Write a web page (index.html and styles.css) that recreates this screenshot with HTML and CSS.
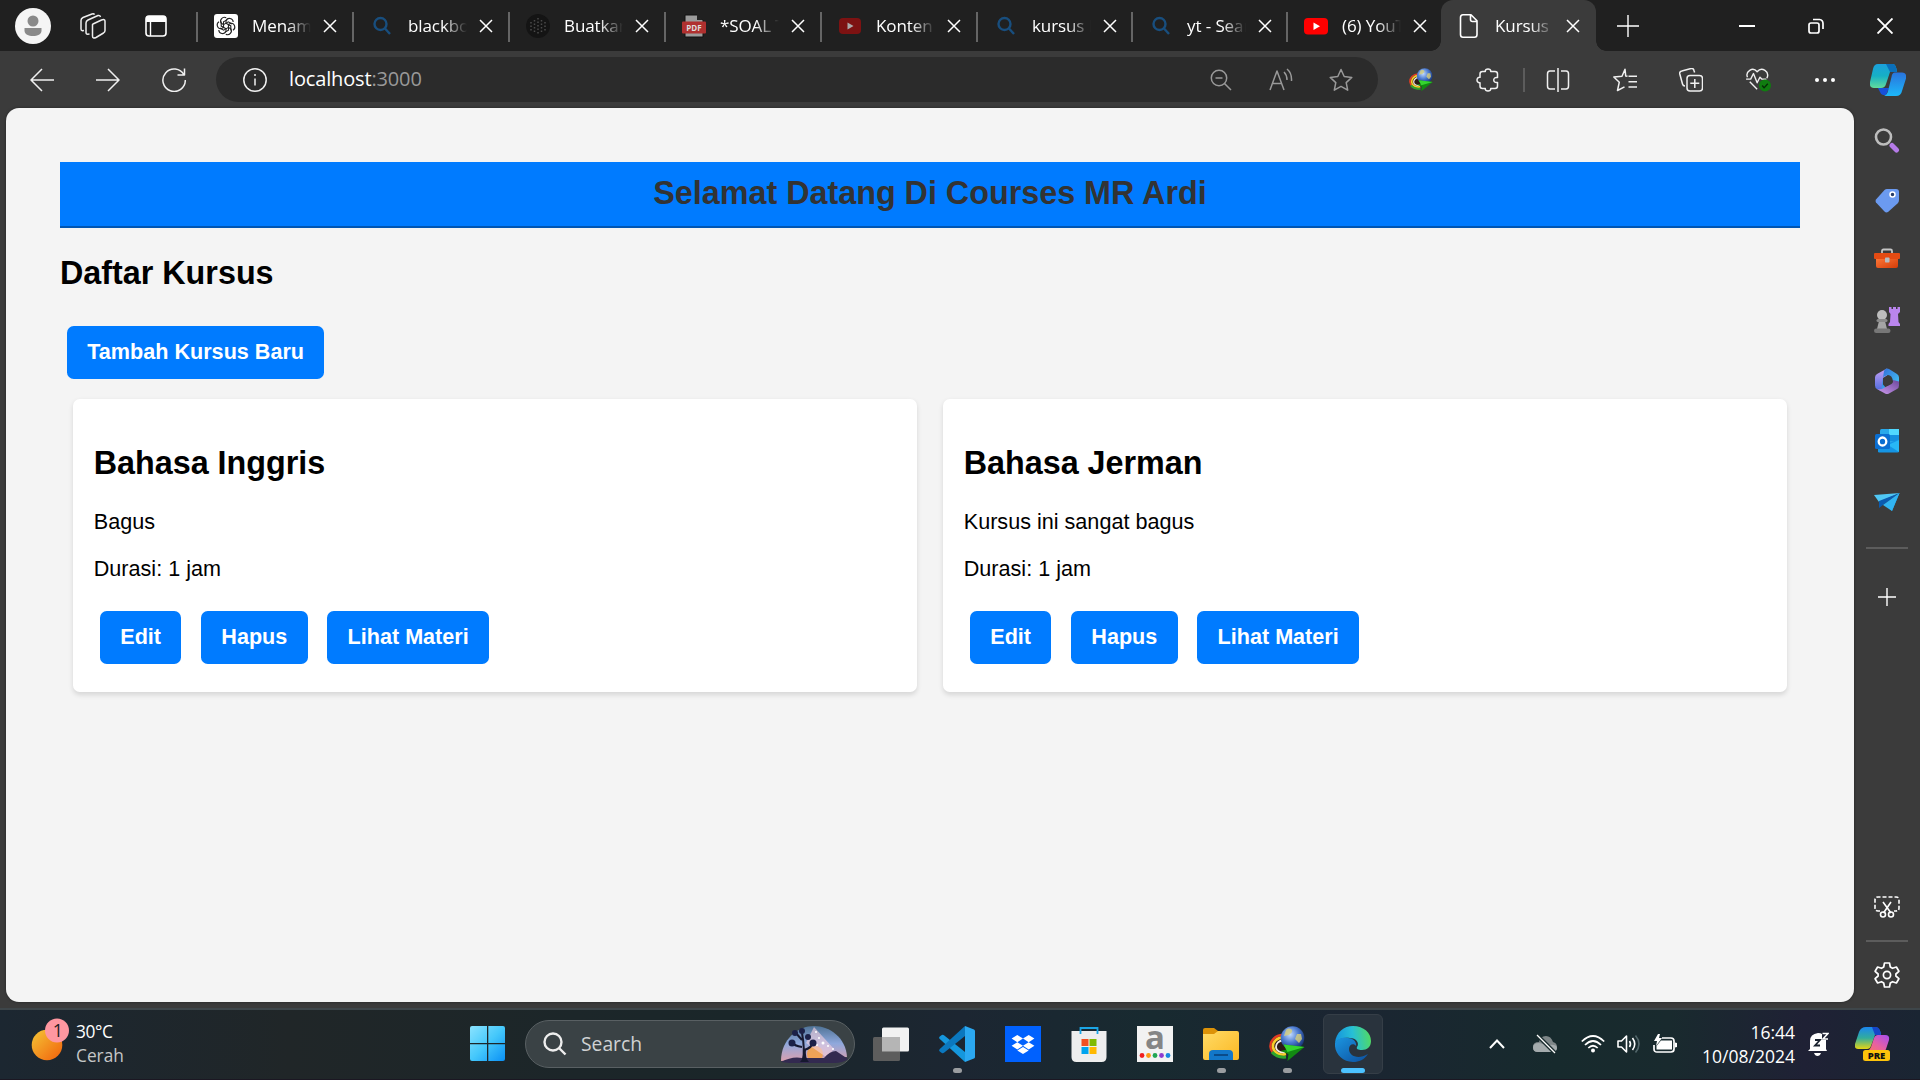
FILE: index.html
```html
<!DOCTYPE html>
<html lang="id">
<head>
<meta charset="utf-8">
<title>Kursus</title>
<link rel="stylesheet" href="styles.css">
</head>
<body>
<svg width="0" height="0" class="defs">
  <defs>
    <linearGradient id="gStart" x1="0" y1="0" x2="1" y2="1"><stop offset="0" stop-color="#8be3ff"/><stop offset=".5" stop-color="#45c8fb"/><stop offset="1" stop-color="#0a90f5"/></linearGradient>
    <linearGradient id="gSun" x1="0" y1="0" x2="1" y2="1"><stop offset="0" stop-color="#f5c636"/><stop offset="1" stop-color="#f1600b"/></linearGradient>
    <linearGradient id="gCopA" x1="0" y1="0" x2="0" y2="1"><stop offset="0" stop-color="#1ba0dc"/><stop offset=".5" stop-color="#16b0c5"/><stop offset="1" stop-color="#62dc9c"/></linearGradient>
    <linearGradient id="gCopB" x1="0" y1="0" x2="0" y2="1"><stop offset="0" stop-color="#2a73dc"/><stop offset="1" stop-color="#1cb8fa"/></linearGradient>
    <linearGradient id="gPreA" x1="0" y1="0" x2="0" y2="1"><stop offset="0" stop-color="#1b86f0"/><stop offset=".5" stop-color="#32ad9c"/><stop offset="1" stop-color="#e6d414"/></linearGradient>
    <linearGradient id="gPreB" x1="1" y1="0" x2="0" y2="1"><stop offset="0" stop-color="#a54df0"/><stop offset=".5" stop-color="#e55fa5"/><stop offset="1" stop-color="#ff7a52"/></linearGradient>
    <linearGradient id="gEdgeA" x1="0" y1=".5" x2="1" y2=".4"><stop offset="0" stop-color="#1593dd"/><stop offset=".5" stop-color="#27bfd6"/><stop offset="1" stop-color="#52da61"/></linearGradient>
    <linearGradient id="gEdgeB" x1="0" y1="0" x2="1" y2="1"><stop offset="0" stop-color="#1b95e0"/><stop offset="1" stop-color="#0c4f9e"/></linearGradient>
    <linearGradient id="gFolder" x1="0" y1="0" x2="1" y2="1"><stop offset="0" stop-color="#ffdb66"/><stop offset="1" stop-color="#fbb823"/></linearGradient>
    <radialGradient id="gGlobe" cx=".4" cy=".35" r=".7"><stop offset="0" stop-color="#c3dcff"/><stop offset=".5" stop-color="#4b7ad0"/><stop offset="1" stop-color="#122d6d"/></radialGradient>
    <linearGradient id="gM1" x1="0" y1="0" x2="0" y2="1"><stop offset="0" stop-color="#c8a0f3"/><stop offset="1" stop-color="#4a6be0"/></linearGradient>
    <linearGradient id="gM2" x1="0" y1="0" x2="1" y2="1"><stop offset="0" stop-color="#3168d8"/><stop offset="1" stop-color="#46d3f9"/></linearGradient>
    <linearGradient id="gM3" x1="0" y1="1" x2="1" y2="0"><stop offset="0" stop-color="#cf9bef"/><stop offset="1" stop-color="#6b479c"/></linearGradient>
    <linearGradient id="gOr" x1="0" y1="0" x2="1" y2="1"><stop offset="0" stop-color="#ff7b3b"/><stop offset="1" stop-color="#d43c08"/></linearGradient>
    <linearGradient id="gSky" x1="0" y1="0" x2="0" y2="1"><stop offset="0" stop-color="#4f7396"/><stop offset=".5" stop-color="#8fa8dc"/><stop offset="1" stop-color="#d9a0b0"/></linearGradient>
  </defs>
  <symbol id="x" viewBox="0 0 16 16"><path d="M2 2l12 12M14 2L2 14" fill="none" stroke="#fff" stroke-width="1.5"/></symbol>
  <symbol id="find" viewBox="0 0 24 24"><g fill="none" stroke="#184e7e" stroke-width="2.4"><circle cx="10.5" cy="10" r="6"/><path d="M15 14.5l5 5.500"/></g></symbol>
  <symbol id="idm" viewBox="0 0 36 36">
    <ellipse cx="12" cy="21" rx="10" ry="9" fill="#2c1a16"/>
    <path d="M14 9C6 9 1 15 1.500 21s7 11 15 9" fill="none" stroke="#e23b22" stroke-width="2.500"/>
    <path d="M14 11.500C8 11.500 3.500 16 4 21s6 9 13 7" fill="none" stroke="#f7cf2a" stroke-width="2.600"/>
    <path d="M3 26q5 6 14 5" fill="none" stroke="#2da52c" stroke-width="3"/>
    <path d="M14 14.500c-4 0-7 3-7 6.500s4 6 9 5" fill="none" stroke="#f3ece2" stroke-width="1.800"/>
    <circle cx="23.500" cy="12" r="11.800" fill="url(#gGlobe)"/>
    <path d="M17 4c3-3 7-1 6 2l-3 3-5 1zM28 8l4 0 1 5-3 4-4-4z" fill="#d8cf7b" opacity=".8"/>
    <path d="M14.500 18.500l21 2.500-17 14 1-7-8-3 6-1.500z" fill="#128a12"/><path d="M14.500 18.500l21 2.500-17 5z" fill="#35d52f"/>
  </symbol>
  <symbol id="star" viewBox="0 0 24 24"><path d="M12 1.500l3.200 7 7.600.9-5.600 5.200 1.500 7.600-6.700-3.800-6.700 3.800 1.500-7.600L1.200 9.400l7.600-.9z" fill="none" stroke="currentColor" stroke-width="1.500" stroke-linejoin="round"/></symbol>
</svg>

<header class="tabstrip">
  <div class="strip-tools">
    <svg class="avatar" viewBox="0 0 36 36"><circle cx="18" cy="18" r="18" fill="#f5f5f5"/><circle cx="18" cy="13" r="5.500" fill="#8a8a8a"/><path d="M9.500 20h17v2.500c0 4-4 5.500-8.500 5.500s-8.500-1.500-8.500-5.500z" fill="#8a8a8a"/></svg>
    <svg class="i26" viewBox="0 0 26 26" fill="none" stroke="#eee" stroke-width="1.500" stroke-linejoin="round"><path d="M13 11l8.500-4q3.500-1.200 3.500 1.200v9.300q0 1.500-1.500 2.500l-7.500 4.500q-3.500 1.500-3.500-1.500V11.500z"/><path d="M9.500 21l-2 .3q-1.500 0-1.500-2V10q0-2 2-3l10-4.500q2-.5 2.500 1.500"/><path d="M4 17.500l-1.500.3Q1 17.500 1 16V7.500q0-2 2-3L12 1q2-.5 2.500.6"/></svg>
    <svg class="i22" viewBox="0 0 22 22"><rect x="1" y="1" width="20" height="20" rx="3" fill="none" stroke="#fff" stroke-width="1.600"/><path d="M1 7V4q0-3 3-3h14q3 0 3 3v3z" fill="#fff"/><path d="M5.500 6v15" stroke="#fff" stroke-width="1.400"/></svg>
  </div>
  <nav class="tabs">
    <div class="tab"><svg class="fav" viewBox="0 0 24 24"><rect width="24" height="24" rx="3" fill="#fff"/><g fill="none" stroke="#222" stroke-width="1.100"><path id="petal" d="M12 9.200V6.500a3.800 3.800 0 0 1 7.200 1.600M12 9.200l4.800 2.700v4.500"/><use href="#petal" transform="rotate(60 12 12)"/><use href="#petal" transform="rotate(120 12 12)"/><use href="#petal" transform="rotate(180 12 12)"/><use href="#petal" transform="rotate(240 12 12)"/><use href="#petal" transform="rotate(300 12 12)"/></g></svg><span class="title">Menam</span><svg class="close"><use href="#x"/></svg></div>
    <div class="tab"><svg class="fav"><use href="#find"/></svg><span class="title">blackbo</span><svg class="close"><use href="#x"/></svg></div>
    <div class="tab"><svg class="fav" viewBox="0 0 24 24"><circle cx="12" cy="12" r="12" fill="#141414"/><g stroke="#4a4a4a" stroke-width="1.500" stroke-dasharray="1.500 2"><path d="M12 4v17M8.500 6v13M15.500 6v13M5 8v9M19 8v9"/></g></svg><span class="title">Buatkan</span><svg class="close"><use href="#x"/></svg></div>
    <div class="tab"><svg class="fav" viewBox="0 0 24 24"><path d="M3 1h12l6 5v17H3z" fill="#9b9b9b" stroke="#111"/><path d="M15 0v6h6z" fill="#222"/><rect x="0" y="7.500" width="24" height="12" rx="1" fill="#b0302f"/><text x="12" y="17" text-anchor="middle" class="pdf">PDF</text></svg><span class="title">*SOAL T</span><svg class="close"><use href="#x"/></svg></div>
    <div class="tab"><svg class="fav" viewBox="0 0 24 24"><rect x="1" y="4" width="22" height="16" rx="4" fill="#7d1212"/><path d="M9.500 8.500v7l6-3.500z" fill="#aaa"/></svg><span class="title">Konten</span><svg class="close"><use href="#x"/></svg></div>
    <div class="tab"><svg class="fav"><use href="#find"/></svg><span class="title">kursus l</span><svg class="close"><use href="#x"/></svg></div>
    <div class="tab"><svg class="fav"><use href="#find"/></svg><span class="title">yt - Sear</span><svg class="close"><use href="#x"/></svg></div>
    <div class="tab"><svg class="fav" viewBox="0 0 24 24"><rect y="4" width="24" height="16.500" rx="4" fill="#f00"/><path d="M9.500 8.500v7.500l6.500-3.700z" fill="#fff"/></svg><span class="title">(6) YouT</span><svg class="close"><use href="#x"/></svg></div>
    <div class="tab active"><svg class="fav" viewBox="0 0 24 24" fill="none" stroke="#fff" stroke-width="1.600" stroke-linejoin="round"><path d="M6 .8h8l6 6V20.500q0 2.700-2.500 2.700H6q-2.500 0-2.500-2.700V3.500Q3.500.8 6 .8zM13.500 1v4.500q0 2 2 2H20"/></svg><span class="title">Kursus I</span><svg class="close"><use href="#x"/></svg></div>
  </nav>
  <svg class="newtab" viewBox="0 0 22 22"><path d="M11 0v22M0 11h22" stroke="#fff" stroke-width="1.400"/></svg>
  <div class="wincontrols">
    <svg viewBox="0 0 16 16"><path d="M0 8h16" stroke="#fff" stroke-width="2"/></svg>
    <svg viewBox="0 0 16 16" fill="none" stroke="#fff" stroke-width="1.700"><rect x="1" y="5" width="10" height="10" rx="2"/><path d="M5 1.500h6.500q3.500.5 3.500 4V11"/></svg>
    <svg viewBox="0 0 16 16"><path d="M.5.5l15 15M15.500.5l-15 15" stroke="#fff" stroke-width="1.900"/></svg>
  </div>
</header>

<div class="toolbar">
  <div class="nav">
    <svg viewBox="0 0 24 24"><path d="M24 12H1M12 1L1 12l11 11"/></svg>
    <svg viewBox="0 0 24 24"><path d="M0 12h23M12 1l11 11-11 11"/></svg>
    <svg viewBox="0 0 24 24"><path d="M22 7A11.200 11.200 0 1 0 23.300 12M22.500.5V7h-7"/></svg>
  </div>
  <div class="address">
    <svg viewBox="0 0 24 24" class="info"><circle cx="12" cy="12" r="11.200"/><path d="M12 10.500v7M12 6v2"/></svg>
    <div class="url">localhost<span>:3000</span></div>
    <div class="addr-icons">
      <svg viewBox="0 0 24 24"><circle cx="10" cy="10" r="7.700"/><path d="M6.500 10h7M15.500 15.500l6.500 6.500"/></svg>
      <svg viewBox="0 0 24 24"><path d="M1 22L8 3l7 19M3.500 15.500h9M15 4q3 3 3 8M18 1q5 4 4.500 12"/></svg>
      <svg viewBox="0 0 24 24"><use href="#star"/></svg>
    </div>
  </div>
  <div class="ext">
    <svg viewBox="0 0 36 36"><use href="#idm"/></svg>
    <svg viewBox="0 0 24 24"><path d="M6.500 3.500h2.800c-.8-3.400 6.200-3.400 5.400 0h4.300q2.500 0 2.500 2.500v3.500c-5-1-5 6 0 5v3.500q0 2.500-2.500 2.500h-4.300c.8 3.400-6.200 3.400-5.400 0H6.500Q4 20.500 4 18v-3.300c-4 .6-4-6 0-5.400V6q0-2.500 2.500-2.500z"/></svg>
  </div>
  <div class="actions">
    <svg viewBox="0 0 24 24"><path d="M12 0v24M9 3H4Q1.500 3 1.500 6v12q0 3 2.500 3h5M15 3h5q2.500 0 2.500 3v12q0 3-2.500 3h-5"/></svg>
    <svg viewBox="0 0 24 24"><path d="M14.500 8.300l-1.800-.4L12 1.200 9 8.300l-8.200.7 5.500 5.200L4.500 22.500 11.500 18.800M15.500 8.300H24M15.500 13.800H24M15.500 19H24"/></svg>
    <svg viewBox="0 0 24 24"><rect x="8" y="7.500" width="15.500" height="15.500" rx="3"/><path d="M15.800 11v9M11.300 15.300h9M6 18q-2 0-2.500-2L.8 6q-.5-2.500 2-3L12 .5q2.500-.5 3 2l.6 2"/></svg>
    <svg viewBox="0 0 28 26" class="heart"><path d="M1.500 10C-1 4 7-2 12 4c5-6 14 0 10.500 7M0 12h5l3-6 4 10 3-6 2 2h5M4 15l8 8"/><circle cx="20.500" cy="19" r="6.500" fill="#107c10" stroke="none"/><path d="M17.500 19l2 2.500 4-4.500" stroke="#062d06"/></svg>
    <svg viewBox="0 0 24 24"><g fill="#fff" stroke="none"><circle cx="4" cy="12" r="2"/><circle cx="12" cy="12" r="2"/><circle cx="20" cy="12" r="2"/></g></svg>
  </div>
  <svg class="copilot" viewBox="0 0 36 32"><path d="M8 24h11l-3 7h-3q-2 0-3-3z" fill="#1750d9"/><path d="M8 0h15q3 0 4 8h-7l-4 12q-1 4-5 4H4q-5 0-4-6L3 5q1-5 5-5z" fill="url(#gCopA)"/><path d="M16 0h7q3 0 4 8h-7z" fill="#0a6fba"/><path d="M25 8.500h7q5 0 4 6l-4 12.500q-1 5-6 5H14q3-1 4-5l3.500-14q.5-4.500 3.500-4.500z" fill="url(#gCopB)"/></svg>
</div>

<div class="workspace">
  <main class="page">
    <h1 class="banner">Selamat Datang Di Courses MR Ardi</h1>
    <h2>Daftar Kursus</h2>
    <a class="btn">Tambah Kursus Baru</a>
    <section class="courses">
      <article class="card">
        <h2>Bahasa Inggris</h2>
        <p>Bagus</p>
        <p>Durasi: 1 jam</p>
        <div class="buttons"><a class="btn">Edit</a> <a class="btn">Hapus</a> <a class="btn">Lihat Materi</a></div>
      </article>
      <article class="card">
        <h2>Bahasa Jerman</h2>
        <p>Kursus ini sangat bagus</p>
        <p>Durasi: 1 jam</p>
        <div class="buttons"><a class="btn">Edit</a> <a class="btn">Hapus</a> <a class="btn">Lihat Materi</a></div>
      </article>
    </section>
  </main>

  <aside class="sidebar">
    <div class="apps">
      <svg viewBox="0 0 26 26"><circle cx="9.500" cy="10" r="7.500" fill="none" stroke="#bdbdbd" stroke-width="2.600"/><path d="M18 18.500l4.500 4.500" stroke="#b57be8" stroke-width="5" stroke-linecap="round"/></svg>
      <svg viewBox="0 0 26 26"><path d="M13 2h9q3 0 3 3v8q0 2-1.500 3.500L14 25q-2 1-3.500-.5l-8.500-9q-1-1.500 0-3L10.500 3q1-1 2.500-1z" fill="#6b9af0"/><circle cx="18.500" cy="7.500" r="2.500" fill="#263b66" stroke="#fff" stroke-width="1.500"/></svg>
      <svg viewBox="0 0 26 26"><path d="M8 7V4q0-1.500 1.500-1.500h7Q18 2.500 18 4v3" fill="none" stroke="#c5c5c5" stroke-width="1.800"/><path d="M2 10h22v9q0 2-2 2H4q-2 0-2-2z" fill="url(#gOr)"/><rect y="6" width="26" height="6" rx="1" fill="#e44b13"/><rect x="11" y="10.500" width="4.500" height="5" rx=".8" fill="#b7bcc0"/></svg>
      <svg viewBox="0 0 26 26"><path d="M15 0h2.500v2H19V0h3v2h1.500V0H26v5l-2 2 .5 8 1.500 2v2H14.500v-2l1.500-2 .5-8-1.500-2z" fill="#ba85ee"/><circle cx="8" cy="8" r="5" fill="#bdbdbd"/><path d="M5 14h6l2 8H3z" fill="#a5a5a5"/><rect x="2.500" y="12" width="11" height="3" rx="1.500" fill="#8b8b8b"/><rect x="0" y="21.500" width="16.500" height="4.500" rx="2.200" fill="#777"/></svg>
      <svg viewBox="0 0 26 26"><path d="M13 .5L3 6Q1 7 1 9.500v8Q1 20 3 21l4 2.300 2-6V10l4-2.500z" fill="url(#gM1)"/><path d="M7 23.300L12.500 20.500 9 16.500V10q0-1 1-1.500l4-1.500q4 0 5 6l6 1.500V9.500q0-2.500-2-3.500l-8-5q-2-1-4 .2L10 3z" fill="url(#gM2)"/><path d="M3 21q5 1 9.500-2.500l5-2.500q2-1.500 1.500-4l6 1.500v4q0 2.500-2 3.500l-8 4.500q-2 1-4 0z" fill="url(#gM3)"/><path d="M13 8.300l4.200 2.500v4.800L13 18l-4-2.400v-4.800z" fill="#3b3b3b"/></svg>
      <svg viewBox="0 0 26 26"><rect x="6" y="1" width="19" height="20" rx="1.500" fill="#28a8ea"/><path d="M15 1h10v6H15z" fill="#50d9ff"/><path d="M15 7h10v6H15z" fill="#1490df"/><path d="M4 24V16l11-1 10-4v12q0 1.500-1.500 1.500H5z" fill="#1595e5"/><path d="M25 12v12L14 17z" fill="#28b8f5"/><rect x="1" y="6" width="15" height="15" rx="1.500" fill="#0a6ed1"/><ellipse cx="8.500" cy="13.500" rx="3.800" ry="4" fill="none" stroke="#fff" stroke-width="2.300"/></svg>
      <svg viewBox="0 0 26 26"><path d="M0 7l26-2L5 14z" fill="#50c8f5"/><path d="M25.500 5L18 23l-6-6z" fill="#159ce8"/><path d="M25.500 5L5 13v7l4-3z" fill="#0a5bb0"/><path d="M25.500 5L9 17l9 6z" fill="#31b4f2"/></svg>
    </div>
    <hr>
    <svg class="add" viewBox="0 0 20 20"><path d="M10 1v18M1 10h18" stroke="#fff" stroke-width="1.400"/></svg>
    <div class="side-bottom">
      <svg viewBox="0 0 26 26" fill="none" stroke="#fff" stroke-width="1.600"><path d="M6 18H4q-3 0-3-3V7q0-3 3-3h18q3 0 3 3v8q0 3-3 3h-2" stroke-dasharray="4 2"/><path d="M9 9l8 11M17 9L9.500 20"/><circle cx="9" cy="21.500" r="2.500"/><circle cx="17" cy="21.500" r="2.500"/></svg>
      <hr>
      <svg viewBox="0 0 26 26" fill="none" stroke="#fff" stroke-width="1.700" stroke-linejoin="round"><circle cx="13" cy="13" r="3.600"/><path d="M10.500 1h5l.8 4 2.200 1.300 3.900-1.300 2.500 4.300-3 2.700v2l3 2.700-2.500 4.300-3.900-1.300-2.200 1.300-.8 4h-5l-.8-4-2.200-1.300L3.600 21 1.100 16.700l3-2.700v-2l-3-2.700L3.600 5l3.900 1.300L9.700 5z"/></svg>
    </div>
  </aside>
</div>

<footer class="taskbar">
  <div class="weather">
    <svg viewBox="0 0 42 50"><circle cx="17" cy="29" r="15.300" fill="url(#gSun)"/><circle cx="27" cy="14.500" r="12" fill="#ff97a0"/><text x="28" y="20.500" text-anchor="middle">1</text></svg>
    <div><b>30°C</b><span>Cerah</span></div>
  </div>
  <svg class="start" viewBox="0 0 35 35" fill="url(#gStart)"><path d="M2 0h15v17H0V2q0-2 2-2zM18.300 0H33q2 0 2 2v15H18.300zM0 18.300h17V35H2q-2 0-2-2zM18.300 18.300H35V33q0 2-2 2H18.300z"/></svg>
  <div class="search">
    <svg class="mag" viewBox="0 0 24 24" fill="none" stroke="#eee" stroke-width="2.400"><circle cx="10" cy="10" r="8.500"/><path d="M16 16l6.500 6.500"/></svg>
    <span>Search</span>
    <svg class="scene" viewBox="0 0 68 38"><path d="M1 36C1 14 18 1 34 1s32 12 33 31z" fill="url(#gSky)"/><circle cx="35" cy="29" r="8" fill="#f7a244" opacity=".85"/><path d="M26 18l8-16 20 22-8 8z" fill="#f7d2e1" opacity=".6"/><g fill="#fff"><circle cx="39" cy="13" r="1"/><circle cx="43" cy="18" r="1.500"/><circle cx="37" cy="20" r="1"/><circle cx="48" cy="21" r="1"/><circle cx="53" cy="24" r="1"/><circle cx="36" cy="7" r="1"/></g><path d="M1 37q11-6 21-4l22 0q6-7 12-7l12 8q-5 4-14 4H10z" fill="#332a50"/><g fill="none" stroke="#16182f" stroke-width="2"><path d="M23 36q2-12-1-28M22 22q-8-1-10-5M24 25q8-2 9-8M22 15l-7-8" /></g><g fill="#1c2148"><circle cx="12" cy="18" r="3.500"/><circle cx="15" cy="8" r="3"/><circle cx="22" cy="6" r="3"/><circle cx="28" cy="12" r="3"/><circle cx="33" cy="18" r="3.500"/></g><path d="M20 37q4-4 3-13h3q-1 9 3 13z" fill="#16182f"/></svg>
  </div>
  <div class="pinned">
    <div class="app"><svg viewBox="0 0 36 36"><rect x="9" y="1.500" width="27" height="24" rx="1.500" fill="#f2f2f2"/><rect x="0" y="11" width="27" height="24" rx="1.500" fill="#5d5d5d"/><path d="M9 11h18v14.500H9z" fill="#b5b5b5"/></svg></div>
    <div class="app running"><svg viewBox="0 0 36 36"><path d="M.8 13q-1.300-1.500 0-2.500l2-1.500q1.200-.6 2.500.4L26 26v10z" fill="#1597dd"/><path d="M.8 23q-1.300 1.500 0 2.500l2 1.500q1.200.6 2.500-.4L26 10V0z" fill="#0b78bf"/><path d="M26 0l9 3.500q1 .5 1 1.500v26q0 1-1 1.500L26 36z" fill="#2ba8f1"/></svg></div>
    <div class="app"><svg viewBox="0 0 36 36"><rect width="36" height="36" fill="#0061fe"/><path d="M12.300 9l5.700 3.600-5.700 3.600-5.700-3.600zM23.700 9l5.700 3.600-5.700 3.600-5.700-3.600zM12.300 16.200l5.700 3.600-5.700 3.600-5.700-3.600zM23.700 16.200l5.700 3.600-5.700 3.600-5.700-3.600zM18 21l5.700 3.400L18 28l-5.700-3.600z" fill="#fff"/></svg></div>
    <div class="app"><svg viewBox="0 0 36 36"><path d="M.5 5h35v26q0 5-5 5H5.500q-5 0-5-5z" fill="#eee"/><path d="M9.500 8V2h17v6" fill="none" stroke="#1ba5e5" stroke-width="1.800"/><path d="M10.500 13h7v7h-7z" fill="#f25022"/><path d="M18.500 13h7v7h-7z" fill="#7fba00"/><path d="M10.500 21h7v7h-7z" fill="#00a4ef"/><path d="M18.500 21h7v7h-7z" fill="#ffb900"/></svg></div>
    <div class="app"><svg viewBox="0 0 36 36"><rect width="36" height="36" fill="#f2f2f2"/><text x="18" y="23" text-anchor="middle" class="amz">a</text><g><circle cx="5" cy="29.500" r="2.400" fill="#f01f1f"/><circle cx="11.500" cy="29.500" r="2.400" fill="#fb9a13"/><circle cx="18" cy="29.500" r="2.400" fill="#20a653"/><circle cx="24.500" cy="29.500" r="2.400" fill="#8d3bd0"/><circle cx="31" cy="29.500" r="2.400" fill="#1788e0"/></g></svg></div>
    <div class="app running"><svg viewBox="0 0 36 36"><path d="M0 4q0-2 2-2h9l4 3v5H0z" fill="#dc9208"/><path d="M0 8h11l4-3h19q2 0 2 2v25q0 2-2 2H2q-2 0-2-2z" fill="url(#gFolder)"/><path d="M6 34v-6q0-4 4-4h16q4 0 4 4v6z" fill="#1277c9"/><path d="M11 29h14" stroke="#0a4b89" stroke-width="2"/></svg></div>
    <div class="app running"><svg viewBox="0 0 36 36"><use href="#idm"/></svg></div>
    <div class="app current"><svg viewBox="0 0 36 36"><path d="M0 17C1 6 9 0 18 0c11 0 18 7 18 15 0 6-4 9-9 9-4 0-6-1-5-3 3-4-1-9-7-9C8 11 3 13 0 17z" fill="url(#gEdgeA)"/><path d="M0 17c2-4 7-6 13-5 5 0 9 4 8 8-2-3-7-2-7 3 0 7 9 11 19 5-4 6-9 8-15 8C7 36-1 27 0 17z" fill="url(#gEdgeB)"/></svg></div>
  </div>
  <div class="tray">
    <svg class="chev" viewBox="0 0 16 10"><path d="M1 9l7-7.500L15 9" fill="none" stroke="#fff" stroke-width="2"/></svg>
    <svg class="cloud" viewBox="0 0 24 20"><path d="M5 18q-5 0-5-5t6-5q1-6 7-6 5 0 7 6 4 1 4 5t-5 5z" fill="#7e8688"/><path d="M5 18q-5 0-5-4.500T6 9l9 2q9-1 9 3t-5 4z" fill="#a4abad"/><path d="M4 1l18 18" stroke="#1a2c2e" stroke-width="4"/><path d="M4 1l18 18" stroke="#fff" stroke-width="1.300"/></svg>
    <svg class="wifi" viewBox="0 0 24 18" fill="none" stroke="#fff" stroke-width="1.700"><path d="M.8 6.500q11.200-11 22.400 0M4 10q8-8 16 0M7.300 13q4.700-4.500 9.400 0"/><circle cx="12" cy="15.500" r="2" fill="#fff" stroke="none"/></svg>
    <svg class="vol" viewBox="0 0 24 20" fill="none" stroke="#fff" stroke-width="1.600"><path d="M1 7h3.500L9.500 2v16l-5-5H1z" stroke-linejoin="round"/><path d="M12.500 7q2 3 0 6M15.500 4q4.500 6 0 12"/><path d="M18.500 1.500q7 8.500 0 17" stroke="#52666a"/></svg>
    <svg class="bat" viewBox="0 0 24 20"><path d="M9 4h9q3 0 3 3v8q0 3-3 3H4q-3 0-3-3v-4" fill="none" stroke="#fff" stroke-width="1.700"/><path d="M8 6.500h11V15.500H3.500V12zM22 8.500l2 .5v4l-2 .5zM5 0L1 7h3l-1 5 6-8H6l1-4z" fill="#fff"/></svg>
    <div class="clock"><span>16:44</span><span>10/08/2024</span></div>
    <svg class="bell" viewBox="0 0 21 24"><path d="M2 17V9q0-7 8-8 3 0 4 1v6h4v9l1 2H0zM6 21h7q-1 3-3.500 3T6 21z" fill="#fff"/><path d="M7 8h5l-5 5.500h5" fill="none" stroke="#1a222f" stroke-width="1.800"/><path d="M14.500 1.500H20l-5 5.500h5" fill="none" stroke="#fff" stroke-width="1.600"/></svg>
    <svg class="pre" viewBox="0 0 36 36"><path d="M11 1h9q5 0 6 8h-6l-4 11q-1 3-4 3H3q-4 0-3-5L4 6q2-5 7-5z" fill="url(#gPreA)"/><path d="M17 1h4q4 0 5 8h-6z" fill="#1646c8"/><path d="M23 9h7q5 0 4 5l-3 9q-1 3-4 3H8q6 0 8-5l3-9q1-3 4-3z" fill="url(#gPreB)"/><rect x="8" y="24" width="27" height="11" rx="2.500" fill="#fdc30b"/><text x="21.500" y="33" text-anchor="middle">PRE</text></svg>
  </div>
</footer>
</body>
</html>
```
FILE: styles.css
```css
* { box-sizing: border-box; }
html, body { height: 100%; }
body {
  margin: 0;
  display: flex;
  flex-direction: column;
  overflow: hidden;
  background: #3b3b3b;
  color: #fff;
  font-family: "Open Sans", "Noto Sans", sans-serif;
}
svg { display: block; flex: none; }
.defs { position: absolute; }

/* Tab strip */
.tabstrip { display: flex; height: 51px; flex: none; background: #202020; align-items: center; }
.strip-tools { display: flex; align-items: center; width: 196px; padding-left: 15px; flex: none; }
.avatar { width: 36px; height: 36px; }
.i26 { width: 26px; height: 26px; margin-left: 29px; }
.i22 { width: 22px; height: 22px; margin-left: 39px; }
.tabs { display: flex; height: 51px; flex: none; }
.tab {
  display: flex;
  align-items: center;
  width: 156px;
  padding-left: 18px;
  background: linear-gradient(#656565, #656565) 0 12px / 2px 30px no-repeat;
}
.tab:nth-child(n+6) { width: 155px; }
.fav { width: 24px; height: 24px; }
.title {
  width: 59px;
  margin-left: 14px;
  overflow: hidden;
  white-space: nowrap;
  font-size: 17px;
  line-height: 24px;
  letter-spacing: -.1px;
  -webkit-mask-image: linear-gradient(90deg, #000 60%, transparent);
  mask-image: linear-gradient(90deg, #000 60%, transparent);
}
.close { width: 16px; height: 16px; margin-left: 11px; }
.tab.active { position: relative; padding-left: 16px; background: #3b3b3b; border-radius: 12px 12px 0 0; }
.tab.active::before, .tab.active::after {
  content: "";
  position: absolute;
  bottom: 0;
  width: 10px;
  height: 10px;
}
.tab.active::before { left: -10px; background: radial-gradient(circle at 0 0, transparent 9.500px, #3b3b3b 10px); }
.tab.active::after { right: -10px; background: radial-gradient(circle at 100% 0, transparent 9.500px, #3b3b3b 10px); }
.newtab { width: 22px; height: 22px; margin-left: 21px; }
.wincontrols { display: flex; gap: 53px; margin-left: auto; padding-right: 27px; }
.wincontrols svg { width: 16px; height: 16px; }

/* Address bar row */
.toolbar { display: flex; align-items: center; height: 57px; flex: none; }
.toolbar svg { fill: none; stroke: #f0f0f0; stroke-width: 1.500; stroke-linejoin: round; }
.nav { display: flex; padding-left: 9px; }
.nav svg { width: 24px; height: 24px; margin: 0 21px; }
.address {
  display: flex;
  align-items: center;
  width: 1162px;
  height: 45px;
  margin-left: 9px;
  padding: 0 7px 0 27px;
  border-radius: 23px;
  background: #2b2b2b;
}
.info { width: 24px; height: 24px; }
.url { flex: 1; margin-left: 22px; padding-bottom: 1px; font-size: 20px; letter-spacing: -.15px; line-height: 28px; }
.url span { color: #999; }
.addr-icons { display: flex; color: #999; }
.toolbar .addr-icons svg { width: 24px; height: 24px; margin: 0 18px; stroke: #999; }
.ext { display: flex; padding: 0 2px 0 9px; }
.ext svg { width: 24px; height: 24px; margin: 0 21.500px; }
.toolbar .ext svg:first-child { stroke: none; }
.actions { display: flex; height: 24px; border-left: 2px solid #5c5c5c; }
.actions svg { width: 24px; height: 24px; margin: 0 21.300px; }
.actions .heart { width: 28px; margin: 0 18.300px 0 20.300px; }
.toolbar .copilot { width: 36px; height: 32px; margin-left: 12px; stroke: none; }

/* Viewport and side rail */
.workspace { display: flex; height: 900px; flex: none; padding-left: 6px; }
.page {
  width: 1848px;
  height: 894px;
  padding: 54px;
  border-radius: 13px;
  background: #f4f4f4;
  color: #000;
  font-family: "Liberation Sans", Arial, sans-serif;
  font-size: 21.600px;
  line-height: 25px;
  box-shadow: 0 0 3px rgba(0, 0, 0, .4);
}
.page h1, .page h2 { font-size: 32.300px; line-height: 37px; }
.page h2 { margin: 26.500px 0 27px; }
.page p { margin: 22px 0; }
.page .banner {
  margin: 0;
  padding: 13px 0 14px;
  text-align: center;
  color: #333;
  background: #007bff;
  border-bottom: 2px solid #0056b3;
}
.btn {
  display: inline-block;
  margin: 7px 6.750px;
  padding: 13px 20.250px 15px 20.500px;
  border-radius: 6.750px;
  background: #007bff;
  color: #fff;
  font-weight: bold;
  vertical-align: top;
}
.courses { display: grid; grid-template-columns: 1fr 1fr; gap: 26px; padding: 13px; }
.card {
  height: 293px;
  padding: 20.250px 20.750px;
  border-radius: 6.750px;
  background: #fff;
  box-shadow: 0 2.700px 5.400px rgba(0, 0, 0, .12);
}
.card .btn { margin-top: 8px; }
.card .btn:first-child { margin-left: 6px; }

.sidebar { display: flex; flex-direction: column; align-items: center; width: 66px; }
.apps { display: flex; flex-direction: column; padding-top: 1.500px; }
.apps svg { width: 26px; height: 26px; margin: 17.150px 0; }
.sidebar hr { width: 42px; height: 2px; margin: 0; border: 0; background: #5c5c5c; }
.apps + hr { margin-top: 16px; }
.add { width: 20px; height: 20px; margin-top: 38px; }
.side-bottom { display: flex; flex-direction: column; align-items: center; gap: 20px; margin-top: auto; padding-bottom: 20px; }
.side-bottom svg { width: 26px; height: 26px; }
.side-bottom svg:first-child { margin-bottom: 1px; }

/* Taskbar */
.taskbar {
  display: flex;
  align-items: center;
  height: 72px;
  flex: none;
  padding: 0 0 2px 30px;
  border-top: 2px solid #3e464a;
  border-bottom: 1px solid #1b1722;
  background: linear-gradient(90deg, #1c2731, #202628 15%, #1c2629 30%, #1a2629 38%, #1c2632 50%, #182a30 60%, #1b2532 70%, #172a2d 81%, #192a2e 87%, #1f2135 94%, #1a2532);
}
.weather { display: flex; align-items: center; width: 440px; }
.weather svg { width: 42px; height: 50px; margin-top: -5px; }
.weather text { font-size: 18px; fill: #222; }
.weather div { display: flex; flex-direction: column; margin-left: 4px; font-size: 17.300px; line-height: 24px; }
.weather b { font-weight: 400; letter-spacing: -.4px; }
.weather span { color: #c4c6c7; }
.start { width: 35px; height: 35px; }
.search {
  display: flex;
  align-items: center;
  width: 330px;
  height: 48px;
  margin-left: 20px;
  padding: 0 6px 0 17px;
  border: 1px solid #596063;
  border-radius: 24px;
  background: #3a4245;
}
.mag { width: 24px; height: 24px; }
.search span { flex: 1; margin-left: 14px; font-size: 19.300px; color: #d0d2d3; }
.scene { width: 68px; height: 38px; }
.pinned { display: flex; gap: 6px; margin-left: 6px; }
.app { position: relative; width: 60px; height: 60px; padding: 12px; border-radius: 6px; }
.app svg { width: 36px; height: 36px; }
.app.current { background: #29333d; border: 1px solid #353e47; padding: 11px; }
.app.running::after, .app.current::after {
  content: "";
  position: absolute;
  left: 50%;
  bottom: 1px;
  width: 9px;
  height: 5px;
  margin-left: -4.500px;
  border-radius: 3px;
  background: #9a9da0;
}
.app.current::after { bottom: 0; width: 24px; margin-left: -12px; background: #4cc2ff; }
.tray { display: flex; align-items: center; flex: 1; padding-left: 106px; }
.chev { width: 16px; height: 10px; }
.cloud { width: 24px; height: 20px; margin-left: 28px; }
.wifi { width: 24px; height: 18px; margin-left: 24px; }
.vol { width: 24px; height: 20px; margin-left: 12px; }
.bat { width: 24px; height: 20px; margin-left: 12px; }
.clock { display: flex; flex-direction: column; align-items: flex-end; width: 118px; font-size: 17.500px; line-height: 24px; }
.bell { width: 21px; height: 24px; margin-left: 13px; }
.pre { width: 36px; height: 36px; margin-left: 26px; }
.pre text { font-size: 9.500px; font-weight: 800; fill: #111; }
.pdf { font: bold 8px "Open Sans", sans-serif; fill: #ddd; }
.amz { font: bold 33px "Open Sans", sans-serif; fill: #858585; }
```
